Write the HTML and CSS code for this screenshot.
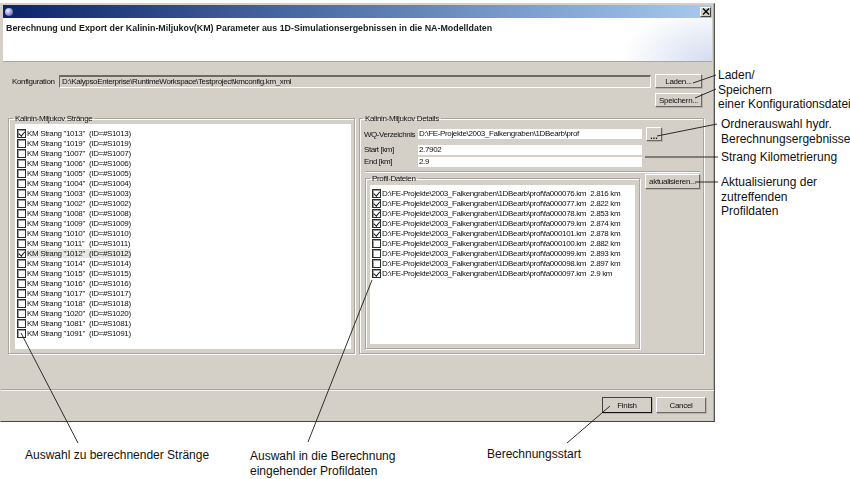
FILE: index.html
```html
<!DOCTYPE html>
<html lang="de">
<head>
    <meta charset="UTF-8">
    <meta name="viewport" content="width=device-width, initial-scale=1.0">
    <title>Kalinin-Miljukov Export</title>
    <link rel="stylesheet" href="styles.css">
</head>
<body>
<div class="page">
    <div class="window">
        <div class="titlebar">
            <span class="app-icon"></span>
            <span class="close-btn">
                <svg width="8" height="7" viewBox="0 0 8 7"><path d="M1 0.5 L7 6.5 M7 0.5 L1 6.5" stroke="#000" stroke-width="1.3" fill="none"/></svg>
            </span>
        </div>
        <div class="banner">Berechnung und Export der Kalinin-Miljukov(KM) Parameter aus 1D-Simulationsergebnissen in die NA-Modelldaten</div>

        <div class="content">
            <div class="config-row">
                <span class="config-label">Konfiguration</span>
                <div class="config-path">D:\KalypsoEnterprise\RuntimeWorkspace\Testproject\kmconfig.km_xml</div>
                <div class="config-buttons">
                    <button class="btn btn-wide">Laden...</button>
                    <button class="btn btn-wide">Speichern...</button>
                </div>
            </div>

            <div class="panes">
                <fieldset class="group group-left">
                    <legend>Kalinin-Miljukov Stränge</legend>
                    <div class="list strand-list">
                        <div class="row"><span class="check on"></span><span class="strand">KM Strang "1013"</span><span>(ID=#S1013)</span></div>
                        <div class="row"><span class="check"></span><span class="strand">KM Strang "1019"</span><span>(ID=#S1019)</span></div>
                        <div class="row"><span class="check"></span><span class="strand">KM Strang "1007"</span><span>(ID=#S1007)</span></div>
                        <div class="row"><span class="check"></span><span class="strand">KM Strang "1006"</span><span>(ID=#S1006)</span></div>
                        <div class="row"><span class="check"></span><span class="strand">KM Strang "1005"</span><span>(ID=#S1005)</span></div>
                        <div class="row"><span class="check"></span><span class="strand">KM Strang "1004"</span><span>(ID=#S1004)</span></div>
                        <div class="row"><span class="check"></span><span class="strand">KM Strang "1003"</span><span>(ID=#S1003)</span></div>
                        <div class="row"><span class="check"></span><span class="strand">KM Strang "1002"</span><span>(ID=#S1002)</span></div>
                        <div class="row"><span class="check"></span><span class="strand">KM Strang "1008"</span><span>(ID=#S1008)</span></div>
                        <div class="row"><span class="check"></span><span class="strand">KM Strang "1009"</span><span>(ID=#S1009)</span></div>
                        <div class="row"><span class="check"></span><span class="strand">KM Strang "1010"</span><span>(ID=#S1010)</span></div>
                        <div class="row"><span class="check"></span><span class="strand">KM Strang "1011"</span><span>(ID=#S1011)</span></div>
                        <div class="row selected"><span class="check on"></span><span class="strand">KM Strang "1012"</span><span>(ID=#S1012)</span></div>
                        <div class="row"><span class="check"></span><span class="strand">KM Strang "1014"</span><span>(ID=#S1014)</span></div>
                        <div class="row"><span class="check"></span><span class="strand">KM Strang "1015"</span><span>(ID=#S1015)</span></div>
                        <div class="row"><span class="check"></span><span class="strand">KM Strang "1016"</span><span>(ID=#S1016)</span></div>
                        <div class="row"><span class="check"></span><span class="strand">KM Strang "1017"</span><span>(ID=#S1017)</span></div>
                        <div class="row"><span class="check"></span><span class="strand">KM Strang "1018"</span><span>(ID=#S1018)</span></div>
                        <div class="row"><span class="check"></span><span class="strand">KM Strang "1020"</span><span>(ID=#S1020)</span></div>
                        <div class="row"><span class="check"></span><span class="strand">KM Strang "1081"</span><span>(ID=#S1081)</span></div>
                        <div class="row"><span class="check"></span><span class="strand">KM Strang "1091"</span><span>(ID=#S1091)</span></div>
                    </div>
                </fieldset>

                <fieldset class="group group-right">
                    <legend>Kalinin-Miljukov Details</legend>
                    <div class="field-row field-wq">
                        <span class="field-label">WQ-Verzeichnis</span>
                        <div class="field">D:\FE-Projekte\2003_Falkengraben\1DBearb\prof</div>
                        <button class="btn btn-dots">...</button>
                    </div>
                    <div class="field-row">
                        <span class="field-label">Start [km]</span>
                        <div class="field">2.7902</div>
                    </div>
                    <div class="field-row">
                        <span class="field-label">End [km]</span>
                        <div class="field">2.9</div>
                    </div>
                    <div class="divider"></div>
                    <div class="profile-row">
                        <fieldset class="group group-profile">
                            <legend>Profil-Dateien</legend>
                            <div class="list profile-list">
                                <div class="row"><span class="check on"></span><span class="file">D:\FE-Projekte\2003_Falkengraben\1DBearb\prof\fa000076.km</span><span>2.816 km</span></div>
                                <div class="row"><span class="check on"></span><span class="file">D:\FE-Projekte\2003_Falkengraben\1DBearb\prof\fa000077.km</span><span>2.822 km</span></div>
                                <div class="row"><span class="check on"></span><span class="file">D:\FE-Projekte\2003_Falkengraben\1DBearb\prof\fa000078.km</span><span>2.853 km</span></div>
                                <div class="row"><span class="check on"></span><span class="file">D:\FE-Projekte\2003_Falkengraben\1DBearb\prof\fa000079.km</span><span>2.874 km</span></div>
                                <div class="row"><span class="check on"></span><span class="file">D:\FE-Projekte\2003_Falkengraben\1DBearb\prof\fa000101.km</span><span>2.878 km</span></div>
                                <div class="row"><span class="check"></span><span class="file">D:\FE-Projekte\2003_Falkengraben\1DBearb\prof\fa000100.km</span><span>2.882 km</span></div>
                                <div class="row"><span class="check"></span><span class="file">D:\FE-Projekte\2003_Falkengraben\1DBearb\prof\fa000099.km</span><span>2.893 km</span></div>
                                <div class="row"><span class="check"></span><span class="file">D:\FE-Projekte\2003_Falkengraben\1DBearb\prof\fa000098.km</span><span>2.897 km</span></div>
                                <div class="row"><span class="check on"></span><span class="file">D:\FE-Projekte\2003_Falkengraben\1DBearb\prof\fa000097.km</span><span>2.9 km</span></div>
                            </div>
                        </fieldset>
                        <button class="btn btn-refresh">aktualisieren...</button>
                    </div>
                </fieldset>
            </div>
        </div>

        <div class="footer">
            <button class="btn btn-footer btn-default">Finish</button>
            <button class="btn btn-footer">Cancel</button>
        </div>
    </div>

    <!-- callouts -->
    <svg class="leaders" width="850" height="479" viewBox="0 0 850 479">
        <path d="M693 83 L716 75"/>
        <path d="M695 98 L716 89"/>
        <path d="M657 136 L717 124"/>
        <path d="M645 157 L718 157"/>
        <path d="M695 182 L718 182"/>
        <path d="M21 333 L78 443"/>
        <path d="M372 280 L308 442"/>
        <path d="M610 406 L567 443"/>
    </svg>
    <div class="note note-laden">Laden/<br>Speichern<br>einer Konfigurationsdatei</div>
    <div class="note note-ordner">Ordnerauswahl hydr.<br>Berechnungsergebnisse</div>
    <div class="note note-km">Strang Kilometrierung</div>
    <div class="note note-aktual">Aktualisierung der<br>zutreffenden<br>Profildaten</div>
    <div class="note note-straenge">Auswahl zu berechnender Stränge</div>
    <div class="note note-profil">Auswahl in die Berechnung<br>eingehender Profildaten</div>
    <div class="note note-start">Berechnungsstart</div>
</div>
</body>
</html>
```

FILE: styles.css
```css
html, body {
    margin: 0;
    padding: 0;
    background: #fff;
}
.page {
    position: relative;
    width: 850px;
    height: 479px;
    overflow: hidden;
    font-family: "Liberation Sans", Arial, sans-serif;
    font-size: 8px;
    letter-spacing: -0.35px;
    color: #111;
}
.window {
    box-sizing: border-box;
    width: 715px;
    height: 419px;
    margin-top: 3px;
    display: flex;
    flex-direction: column;
    background: #d4d0c8;
    border: 1px solid #d4d0c8;
    border-right-color: #555;
    border-bottom-color: #444;
    box-shadow: inset -1px 0 0 #aaa7a0;
    filter: blur(0.3px);
}
.titlebar {
    height: 13px;
    margin: 1px 2px 0 2px;
    display: flex;
    align-items: center;
    justify-content: space-between;
    background: linear-gradient(to right, #0a246a, #a6caf0);
}
.app-icon {
    width: 8px;
    height: 8px;
    margin-left: 2px;
    border-radius: 50%;
    background: radial-gradient(circle at 35% 35%, #f4f4ff, #8f8fd0 55%, #3b3b8f);
}
.close-btn {
    box-sizing: border-box;
    width: 11px;
    height: 10px;
    margin-right: 1px;
    display: flex;
    align-items: center;
    justify-content: center;
    background: #d4d0c8;
    border: 1px solid;
    border-color: #fff #404040 #404040 #fff;
}
.banner {
    height: 44px;
    margin: 0 2px;
    box-sizing: border-box;
    padding: 5px 0 0 3px;
    font-size: 8.9px;
    letter-spacing: 0;
    font-weight: bold;
    color: #1c1c1c;
    background: radial-gradient(ellipse 90px 55px at 100% 100%, #d3dcf0, #fff 100%) #fff;
    border-bottom: 1px solid #aaa7a0;
}
.content {
    flex: 1;
    padding: 12px 8px 0 7px;
    display: flex;
    flex-direction: column;
}
.config-row {
    display: flex;
    align-items: flex-start;
    height: 40px;
}
.config-label {
    width: 47px;
    margin-left: 4px;
    padding-top: 3px;
}
.config-path {
    box-sizing: border-box;
    width: 592px;
    height: 13px;
    margin-top: 1px;
    padding-left: 2px;
    line-height: 10px;
    border: 1px solid;
    border-color: #6d6a64 #fff #fff #6d6a64;
    border-top-width: 2px;
}
.config-buttons {
    margin-left: 4px;
    display: flex;
    flex-direction: column;
    gap: 5px;
}
.btn {
    box-sizing: border-box;
    padding: 0;
    font-family: inherit;
    font-size: 8px;
    letter-spacing: -0.3px;
    color: #111;
    background: #d4d0c8;
    border: 1px solid;
    border-color: #fff #6d6a64 #6d6a64 #fff;
    box-shadow: 1px 1px 0 #b5b2ab;
}
.btn-wide {
    width: 47px;
    height: 14px;
}
.panes {
    display: flex;
    gap: 4px;
    height: 240px;
}
.group {
    box-sizing: border-box;
    min-width: 0;
    margin: 0;
    padding: 0;
    border: 1px solid #a9a69f;
    box-shadow: 1px 1px 0 #fff, inset 1px 1px 0 #fff;
}
.group legend {
    padding: 0 2px;
    font-size: 8px;
    line-height: 9px;
}
.group-left {
    width: 347px;
    padding: 1px 3px 4px 6px;
}
.group-left > legend {
    margin-left: -2px;
}
.group-right {
    width: 345px;
    padding: 4px 3px 4px 5px;
}
.group-right > legend {
    margin-left: -2px;
}
.list {
    background: #fff;
    height: 100%;
    box-sizing: border-box;
}
.strand-list {
    padding-top: 4px;
}
.profile-list {
    padding-top: 3px;
}
.row {
    display: flex;
    align-items: center;
    height: 10px;
    padding-left: 2px;
    white-space: pre;
}
.check {
    box-sizing: border-box;
    flex: none;
    position: relative;
    width: 9px;
    height: 9px;
    margin-right: 1px;
    background: #fff;
    border: 1px solid #2e2e2e;
    box-shadow: inset 1px 1px 0 #999;
}
.check.on::after {
    content: "";
    position: absolute;
    left: 1.5px;
    top: 0;
    width: 2.5px;
    height: 4.5px;
    border: solid #111;
    border-width: 0 1.4px 1.4px 0;
    transform: rotate(40deg);
}
.strand {
    width: 62px;
}
.selected .strand,
.selected .strand ~ span {
    background: #e8e6e2;
}
.file {
    margin-right: 4px;
}
.field-row {
    display: flex;
    align-items: center;
    height: 11px;
    margin-bottom: 1px;
}
.field-wq {
    height: 14px;
    margin-bottom: 3px;
}
.field-label {
    width: 53px;
    margin-left: -1px;
    margin-right: 1px;
    letter-spacing: -0.45px;
    white-space: nowrap;
}
.field {
    box-sizing: border-box;
    width: 224px;
    height: 10px;
    padding-left: 1px;
    line-height: 10px;
    background: #fff;
}
.btn-dots {
    width: 16px;
    height: 14px;
    margin-left: 4px;
    padding-top: 3px;
    font-size: 9px;
    letter-spacing: 0;
    font-weight: bold;
}
.divider {
    height: 1px;
    margin: 4px 0 2px 0;
    background: #a9a69f;
    box-shadow: 0 1px 0 #fff;
}
.profile-row {
    display: flex;
    align-items: flex-start;
    gap: 5px;
    height: 176px;
}
.group-profile {
    flex: none;
    width: 275px;
    height: 175px;
    padding: 2px 4px 4px 4px;
}
.group-profile > legend {
    margin-left: 0;
}
.btn-refresh {
    flex: none;
    width: 55px;
    height: 15px;
}
.footer {
    height: 32px;
    box-sizing: border-box;
    padding: 7px 8px 0 0;
    display: flex;
    justify-content: flex-end;
    gap: 4px;
    border-top: 1px solid #aaa7a0;
    box-shadow: inset 0 1px 0 #f4f2ee;
}
.btn-footer {
    width: 50px;
    height: 16px;
}
.btn-default {
    border-color: #444 #111 #111 #444;
}
.leaders {
    position: absolute;
    left: 0;
    top: 0;
    pointer-events: none;
}
.leaders path {
    stroke: #1a1a1a;
    stroke-width: 0.9;
    fill: none;
}
.note {
    position: absolute;
    font-size: 12px;
    letter-spacing: 0;
    line-height: 14.6px;
    color: #111;
    white-space: nowrap;
}
.note-laden { left: 718px; top: 68px; }
.note-ordner { left: 721px; top: 117px; }
.note-km { left: 721px; top: 150px; }
.note-aktual { left: 721px; top: 175px; }
.note-straenge { left: 25px; top: 448px; }
.note-profil { left: 250px; top: 449px; }
.note-start { left: 487px; top: 447px; }
```
